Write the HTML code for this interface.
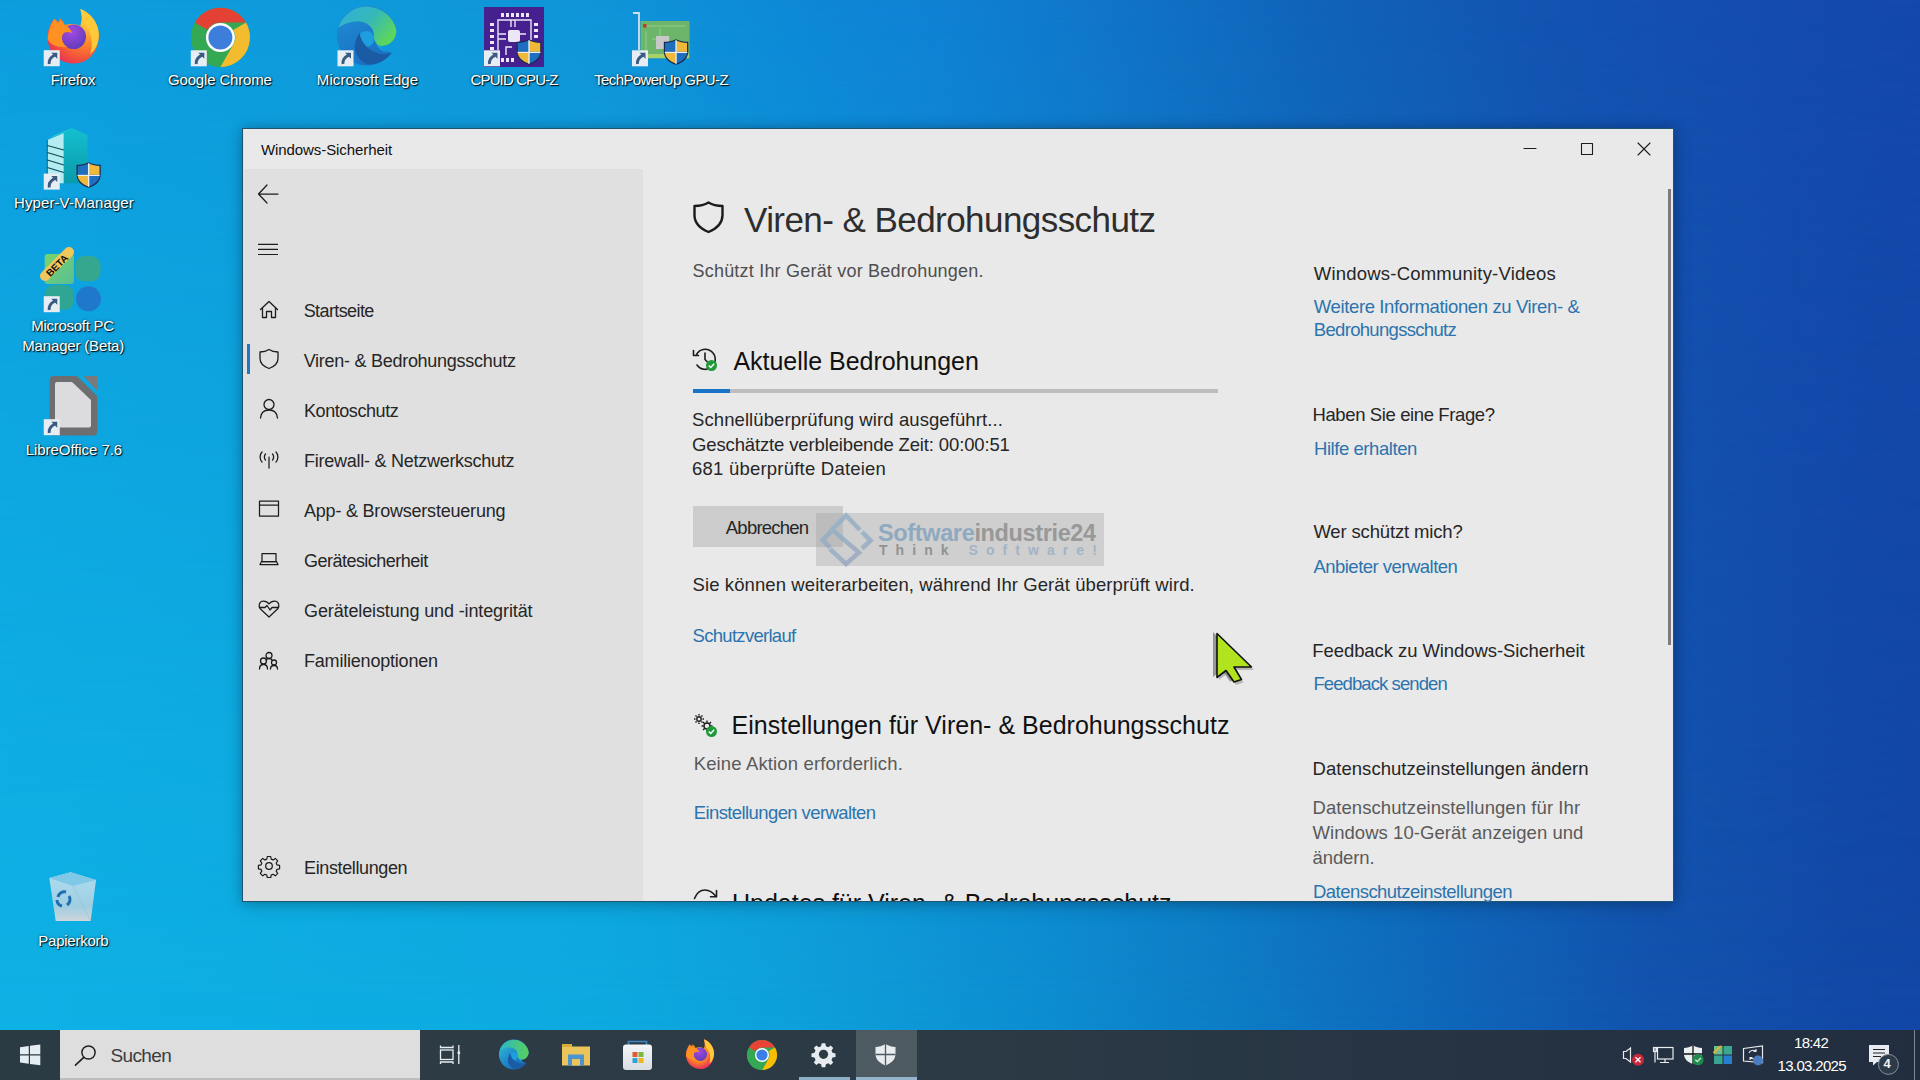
<!DOCTYPE html>
<html><head><meta charset="utf-8"><title>Windows-Sicherheit</title>
<style>
html,body{margin:0;padding:0;width:1920px;height:1080px;overflow:hidden;}
body{position:relative;font-family:"Liberation Sans",sans-serif;}
.t{position:absolute;white-space:pre;}
.dl{text-shadow:1px 1px 1px rgba(0,0,0,.95),0 0 3px rgba(0,0,0,.55);}
.abs{position:absolute;}
#bg{position:absolute;left:0;top:0;width:1920px;height:1030px;
 background:linear-gradient(90deg,rgb(14,178,229) 0%,rgb(13,170,224) 31.3%,rgb(14,160,218) 41.7%,rgb(13,142,210) 54.2%,rgb(13,128,200) 62.5%,rgb(15,104,187) 75%,rgb(18,83,174) 85.9%,rgb(18,73,168) 96.4%,rgb(18,71,167) 100%);}
#bg2{position:absolute;left:0;top:0;width:1920px;height:1030px;
 background:linear-gradient(90deg,rgb(13,157,222) 0%,rgb(14,154,219) 15.6%,rgb(15,148,216) 31.3%,rgb(13,135,213) 42.7%,rgb(15,129,211) 49%,rgb(16,117,200) 57.3%,rgb(16,97,184) 69.8%,rgb(19,83,177) 80.7%,rgb(20,74,173) 94.8%,rgb(21,72,171) 100%);
 -webkit-mask-image:linear-gradient(to bottom,rgba(0,0,0,1) 0%,rgba(0,0,0,.86) 10.7%,rgba(0,0,0,.71) 25%,rgba(0,0,0,.33) 60%,rgba(0,0,0,.14) 77%,rgba(0,0,0,.05) 95%,rgba(0,0,0,0) 100%);mask-image:linear-gradient(to bottom,rgba(0,0,0,1) 0%,rgba(0,0,0,.86) 10.7%,rgba(0,0,0,.71) 25%,rgba(0,0,0,.33) 60%,rgba(0,0,0,.14) 77%,rgba(0,0,0,.05) 95%,rgba(0,0,0,0) 100%);}
#win{position:absolute;left:242px;top:128px;width:1430px;height:772px;border:1px solid #1f5570;background:#e9e9e9;
 box-shadow:0 0 10px rgba(0,0,0,.2),0 4px 18px rgba(0,0,0,.16);overflow:hidden;}
#wintext{position:absolute;left:0;top:0;}
#clipc{position:absolute;left:243px;top:129px;width:1430px;height:772px;overflow:hidden;}
#clipc .t{margin-left:-243px;margin-top:-129px;}
</style></head>
<body>
<div id="bg"></div><div id="bg2"></div>

<svg class="abs" style="left:0;top:0" width="760" height="960" viewBox="0 0 760 960">
<defs>
 <radialGradient id="dffx" cx="0.75" cy="0.2" r="0.95">
  <stop offset="0" stop-color="#ffd23a"/><stop offset="0.45" stop-color="#ff8a28"/><stop offset="0.8" stop-color="#f04a40"/><stop offset="1" stop-color="#e2286a"/>
 </radialGradient>
 <radialGradient id="dffp" cx="0.4" cy="0.3" r="0.8"><stop offset="0" stop-color="#a44ae0"/><stop offset="1" stop-color="#5a3ab8"/></radialGradient>
 <linearGradient id="dedg1" x1="0" y1="0" x2="0.5" y2="1"><stop offset="0" stop-color="#1f8fd6"/><stop offset="1" stop-color="#1a70c2"/></linearGradient>
 <linearGradient id="dedg2" x1="0" y1="0" x2="1" y2="0.6"><stop offset="0" stop-color="#2fb0dc"/><stop offset="0.55" stop-color="#36b8b8"/><stop offset="1" stop-color="#5cd65c"/></linearGradient>
 <linearGradient id="dhv" x1="0" y1="0" x2="0" y2="1"><stop offset="0" stop-color="#13c0cf"/><stop offset="1" stop-color="#0a9aaa"/></linearGradient>
 <linearGradient id="dpcg" x1="0" y1="0" x2="1" y2="1"><stop offset="0" stop-color="#78d46a"/><stop offset="1" stop-color="#58bf95"/></linearGradient>
 <linearGradient id="dbin" x1="0" y1="0" x2="0" y2="1"><stop offset="0" stop-color="#b8dff0"/><stop offset="0.7" stop-color="#a6cfe2"/><stop offset="1" stop-color="#d8d8dc"/></linearGradient>
</defs>
<!-- firefox -->
<g transform="translate(73.2,37)"><path d="M-18.8,-18.2C-24,-12 -26,-5 -25.6,2C-25,16 -13,26.5 0.7,26.5C15,26.5 25.6,15 25.6,-2C25.6,-13 18,-24 7.2,-27.9C9,-22 9,-16 7,-11C4,-13 -3,-14 -8,-12C-10,-14 -12,-16 -13,-19L-15,-15Z" fill="url(#dffx)"/>
<path d="M7.2,-27.9C18,-24 25.6,-13 25.6,-2C25.6,6 22,13 17,17C20,8 19,-3 13,-10C11,-13 9,-18 7.2,-27.9Z" fill="#ffc93a"/>
<circle cx="0.5" cy="-0.3" r="12.3" fill="url(#dffp)"/>
<path d="M-25.6,2C-25,-6 -22,-13 -18.8,-18.2L-15.5,-14L-10.3,-16.3L-9.5,-12.5C-5,-11 -2,-7 -1.3,-4C-6,-6 -10,-5 -11,-1C-12,4 -9,8 -6,10C-15,11 -23,8 -25.6,2Z" fill="#ff9022"/></g>
<g transform="translate(43.75,50.2)"><rect x="0" y="0" width="16" height="16" fill="#e6eef3"/><path d="M7.5,2.5H13.5V8.5Z" fill="#3a5a82"/><path d="M11.2,4.8C7,7 4.8,10 5.5,13.8" fill="none" stroke="#3a5a82" stroke-width="3"/></g>
<!-- chrome -->
<circle cx="220.4" cy="37.4" r="29.6" fill="#34a853"/>
<path d="M220.4,7.8A29.6,29.6 0 0 1 246,22.6H220.4A14.8,14.8 0 0 0 207.6,30L194.8,22.6A29.6,29.6 0 0 1 220.4,7.8Z" fill="#e34133"/>
<path d="M246,22.6A29.6,29.6 0 0 1 220.4,67L233.2,44.8A14.8,14.8 0 0 0 233.2,30Z" fill="#f2bc2e"/>
<circle cx="220.4" cy="37.4" r="14.5" fill="#fff"/><circle cx="220.4" cy="37.4" r="12" fill="#3d7ddb"/>
<g transform="translate(190.8,50.3)"><rect x="0" y="0" width="16" height="16" fill="#e6eef3"/><path d="M7.5,2.5H13.5V8.5Z" fill="#3a5a82"/><path d="M11.2,4.8C7,7 4.8,10 5.5,13.8" fill="none" stroke="#3a5a82" stroke-width="3"/></g>
<!-- edge -->
<g transform="translate(367,36.5)"><path d="M24.6,16A30,30 0 1 1 29.5,-5.4C29,3 23,9.5 15,9.5C12,11 18,15 24.6,16Z" fill="url(#dedg1)"/>
<circle cx="-0.7" cy="2.4" r="8" fill="#1d9ede"/><path d="M7,0C8,8 12,13 17,15L24.6,16C18,15 13,12 15,9.5C10,9.5 7,5 7,0Z" fill="#1d9ede"/>
<path d="M-28.7,-8.6A30,30 0 0 1 29.5,-5.4C29,3 23,9.5 15,9.5C10,9.5 7,5 7.1,-0.2C7,-9 1,-14 -8,-15.2C-16,-15.5 -24,-12 -28.7,-8.6Z" fill="url(#dedg2)"/>
<path d="M-7.2,-3.4C-12,2 -14,12 -10,19C-6,25 -1,28 3,28C12,28 21,22 24.6,16C20,18 17,18 13,17.5C7,16 2,13 -1.5,9C-5,5 -7,1 -7.2,-3.4Z" fill="#1a5ba3"/></g>
<g transform="translate(337.5,50.3)"><rect x="0" y="0" width="16" height="16" fill="#e6eef3"/><path d="M7.5,2.5H13.5V8.5Z" fill="#3a5a82"/><path d="M11.2,4.8C7,7 4.8,10 5.5,13.8" fill="none" stroke="#3a5a82" stroke-width="3"/></g>
<!-- cpu-z -->
<rect x="484" y="7" width="60" height="60" fill="#46208f"/>
<g fill="#ece6f6">
 <rect x="501" y="13" width="3" height="4"/><rect x="506" y="13" width="3" height="4"/><rect x="511" y="13" width="3" height="4"/><rect x="516" y="13" width="3" height="4"/><rect x="521" y="13" width="3" height="4"/><rect x="526" y="13" width="3" height="4"/>
 <rect x="490" y="23" width="4" height="3"/><rect x="490" y="29" width="4" height="3"/><rect x="490" y="35" width="4" height="3"/><rect x="490" y="41" width="4" height="3"/><rect x="490" y="47" width="4" height="3"/>
 <rect x="534" y="23" width="4" height="3"/><rect x="534" y="29" width="4" height="3"/><rect x="534" y="35" width="4" height="3"/>
 <rect x="501" y="58" width="3" height="4"/><rect x="506" y="58" width="3" height="4"/><rect x="511" y="58" width="3" height="4"/>
 <rect x="508" y="30" width="12" height="12" rx="2"/>
</g>
<path d="M498,50V20H531V40M511,20V27M515,20V27M498,34H506M498,39H506M506,55V47H512M520,34H526" fill="none" stroke="#ece6f6" stroke-width="1.4"/>
<g transform="translate(515.5,38.3) scale(1.0384615384615385,1.0)">
<path d="M13,1C9,3 5,3.5 1,3.5V13C1,20 6,24.5 13,26.5C20,24.5 25,20 25,13V3.5C21,3.5 17,3 13,1Z" fill="#1a2a50"/>
<path d="M13,2.2C9.3,4 5.8,4.5 2.2,4.6V13.5H13Z" fill="#1f6fc0"/>
<path d="M13,2.2C16.7,4 20.2,4.5 23.8,4.6V13.5H13Z" fill="#f0b93a"/>
<path d="M2.2,14.5H13V25.2C7,23.4 2.6,19.5 2.2,14.5Z" fill="#f0b93a"/>
<path d="M23.8,14.5H13V25.2C19,23.4 23.4,19.5 23.8,14.5Z" fill="#1f6fc0"/>
<path d="M13,2V25.5M2,14H24" stroke="#e8f0f6" stroke-width="1.3"/></g>
<g transform="translate(484,50.3)"><rect x="0" y="0" width="16" height="16" fill="#e6eef3"/><path d="M7.5,2.5H13.5V8.5Z" fill="#3a5a82"/><path d="M11.2,4.8C7,7 4.8,10 5.5,13.8" fill="none" stroke="#3a5a82" stroke-width="3"/></g>
<!-- gpu-z -->
<path d="M633,13H639V50" fill="none" stroke="#cfe2ee" stroke-width="1.8"/>
<rect x="640.5" y="21" width="49" height="37.5" fill="#6cb56a"/>
<path d="M645,26H685M646,31V54M652,39H670M660,28V44" stroke="#9fd48a" stroke-width="0.8"/>
<rect x="643" y="24" width="3.5" height="3.5" fill="#c03a2a"/>
<rect x="656" y="36" width="13" height="13" fill="#c8c8c8"/>
<rect x="641" y="54" width="48" height="4" fill="#a9cf6a"/>
<g transform="translate(662.8,38.3) scale(1.0192307692307692,1.0)">
<path d="M13,1C9,3 5,3.5 1,3.5V13C1,20 6,24.5 13,26.5C20,24.5 25,20 25,13V3.5C21,3.5 17,3 13,1Z" fill="#1a2a50"/>
<path d="M13,2.2C9.3,4 5.8,4.5 2.2,4.6V13.5H13Z" fill="#1f6fc0"/>
<path d="M13,2.2C16.7,4 20.2,4.5 23.8,4.6V13.5H13Z" fill="#f0b93a"/>
<path d="M2.2,14.5H13V25.2C7,23.4 2.6,19.5 2.2,14.5Z" fill="#f0b93a"/>
<path d="M23.8,14.5H13V25.2C19,23.4 23.4,19.5 23.8,14.5Z" fill="#1f6fc0"/>
<path d="M13,2V25.5M2,14H24" stroke="#e8f0f6" stroke-width="1.3"/></g>
<g transform="translate(632,50.3)"><rect x="0" y="0" width="16" height="16" fill="#e6eef3"/><path d="M7.5,2.5H13.5V8.5Z" fill="#3a5a82"/><path d="M11.2,4.8C7,7 4.8,10 5.5,13.8" fill="none" stroke="#3a5a82" stroke-width="3"/></g>
<!-- hyper-v -->
<path d="M47.3,140L63.8,133V183.3L47.3,183.3Z" fill="#b4ecf2"/>
<path d="M63.8,133L72,128L87.5,135V183.3H63.8Z" fill="url(#dhv)"/>
<path d="M47.3,140L63.8,133L72,128L55,135Z" fill="#28c8d4"/>
<path d="M47.3,145.5L63.8,150M47.3,152.5L63.8,157.5M47.3,160L63.8,165M47.3,167.5L63.8,172.5" stroke="#0b4a58" stroke-width="1.2"/>
<path d="M47.3,140V183" stroke="#0b4a58" stroke-width="0.8"/>
<g transform="translate(75.5,161.3) scale(1.0096153846153846,1.0)">
<path d="M13,1C9,3 5,3.5 1,3.5V13C1,20 6,24.5 13,26.5C20,24.5 25,20 25,13V3.5C21,3.5 17,3 13,1Z" fill="#1a2a50"/>
<path d="M13,2.2C9.3,4 5.8,4.5 2.2,4.6V13.5H13Z" fill="#1f6fc0"/>
<path d="M13,2.2C16.7,4 20.2,4.5 23.8,4.6V13.5H13Z" fill="#f0b93a"/>
<path d="M2.2,14.5H13V25.2C7,23.4 2.6,19.5 2.2,14.5Z" fill="#f0b93a"/>
<path d="M23.8,14.5H13V25.2C19,23.4 23.4,19.5 23.8,14.5Z" fill="#1f6fc0"/>
<path d="M13,2V25.5M2,14H24" stroke="#e8f0f6" stroke-width="1.3"/></g>
<g transform="translate(43.75,173.6)"><rect x="0" y="0" width="16" height="16" fill="#e6eef3"/><path d="M7.5,2.5H13.5V8.5Z" fill="#3a5a82"/><path d="M11.2,4.8C7,7 4.8,10 5.5,13.8" fill="none" stroke="#3a5a82" stroke-width="3"/></g>
<!-- pc manager -->
<rect x="44.7" y="254" width="29.2" height="29.9" rx="3" fill="url(#dpcg)"/>
<rect x="75.2" y="256" width="25.3" height="25.3" rx="9" fill="#3aa786" opacity="0.9"/>
<rect x="44.7" y="285" width="29.2" height="24.8" rx="9" fill="#33a58c" opacity="0.9"/>
<circle cx="88.5" cy="298.8" r="12.5" fill="#1f78cc"/>
<path d="M45,276L69,252" stroke="#efc75a" stroke-width="10" stroke-linecap="round"/>
<text x="0" y="0" transform="translate(59.5,268) rotate(-45)" font-family="Liberation Sans" font-weight="bold" font-size="10" fill="#111" text-anchor="middle">BETA</text>
<g transform="translate(43.75,296.2)"><rect x="0" y="0" width="16" height="16" fill="#e6eef3"/><path d="M7.5,2.5H13.5V8.5Z" fill="#3a5a82"/><path d="M11.2,4.8C7,7 4.8,10 5.5,13.8" fill="none" stroke="#3a5a82" stroke-width="3"/></g>
<!-- libreoffice -->
<path d="M53.6,376H77L97.2,396V431.4A4,4 0 0 1 93.2,435.4H53.6A4,4 0 0 1 49.6,431.4V380A4,4 0 0 1 53.6,376Z" fill="#6e6e70"/>
<path d="M57,382H72L91,400V425.6A2,2 0 0 1 89,427.6H57A2,2 0 0 1 55,425.6V384A2,2 0 0 1 57,382Z" fill="#dcdcde"/>
<path d="M83.6,376H97.2V391.3Z" fill="#7a7a7c"/>
<path d="M80,376L97.2,393" stroke="#0eaae2" stroke-width="2.5"/>
<g transform="translate(43.75,419.2)"><rect x="0" y="0" width="16" height="16" fill="#e6eef3"/><path d="M7.5,2.5H13.5V8.5Z" fill="#3a5a82"/><path d="M11.2,4.8C7,7 4.8,10 5.5,13.8" fill="none" stroke="#3a5a82" stroke-width="3"/></g>
<!-- recycle bin -->
<path d="M49.3,878L70.6,872.3L96,880L90.7,921H55.7Z" fill="url(#dbin)" opacity="0.95"/>
<path d="M49.3,878L70.6,872.3L96,880L73,886Z" fill="#7fc8e6"/>
<path d="M73,886L90.7,921" stroke="#9ac2d6" stroke-width="0.8"/>
<g fill="none" stroke="#1e6fb0" stroke-width="3">
<path d="M58,897A6.5,6.5 0 0 1 66,892"/><path d="M69,896A6.5,6.5 0 0 1 67,905"/><path d="M62,906A6.5,6.5 0 0 1 57,900"/>
</g>
</svg>

<div class="t dl" style="left:50.8px;top:72.40px;font-size:15px;line-height:15px;color:#ffffff;letter-spacing:-0.190px;">Firefox</div>
<div class="t dl" style="left:168.0px;top:72.40px;font-size:15px;line-height:15px;color:#ffffff;letter-spacing:-0.162px;">Google Chrome</div>
<div class="t dl" style="left:316.8px;top:72.40px;font-size:15px;line-height:15px;color:#ffffff;letter-spacing:0.100px;">Microsoft Edge</div>
<div class="t dl" style="left:470.6px;top:72.40px;font-size:15px;line-height:15px;color:#ffffff;letter-spacing:-0.880px;">CPUID CPU-Z</div>
<div class="t dl" style="left:594.2px;top:72.40px;font-size:15px;line-height:15px;color:#ffffff;letter-spacing:-0.615px;">TechPowerUp GPU-Z</div>
<div class="t dl" style="left:14.0px;top:195.40px;font-size:15px;line-height:15px;color:#ffffff;letter-spacing:0.101px;">Hyper-V-Manager</div>
<div class="t dl" style="left:31.2px;top:318.20px;font-size:15px;line-height:15px;color:#ffffff;letter-spacing:-0.274px;">Microsoft PC</div>
<div class="t dl" style="left:22.3px;top:337.90px;font-size:15px;line-height:15px;color:#ffffff;letter-spacing:-0.171px;">Manager (Beta)</div>
<div class="t dl" style="left:25.8px;top:441.50px;font-size:15px;line-height:15px;color:#ffffff;letter-spacing:-0.067px;">LibreOffice 7.6</div>
<div class="t dl" style="left:38.3px;top:933.10px;font-size:15px;line-height:15px;color:#ffffff;letter-spacing:-0.244px;">Papierkorb</div>
<div id="win">
<div class="abs" style="left:0px;top:0px;width:1px;height:772px;background:#c6e8f4"></div>
<div class="abs" style="left:1px;top:40px;width:399px;height:732px;background:#e0e0e0"></div>
<div class="abs" style="left:4px;top:215px;width:3px;height:30px;background:#1e78c2"></div>
<div class="abs" style="left:450px;top:260px;width:525px;height:4px;background:#bdbdbd"></div>
<div class="abs" style="left:450px;top:260px;width:37px;height:4px;background:#1a74c6"></div>
<div class="abs" style="left:450px;top:377px;width:150px;height:41px;background:#cccccc"></div>
<div class="abs" style="left:1425px;top:60px;width:3px;height:456px;background:#7c7c7c"></div>
</div>
<div id="wintext">
<div class="t " style="left:261.0px;top:142.00px;font-size:15px;line-height:15px;color:#111;letter-spacing:-0.081px;">Windows-Sicherheit</div>
<div class="t " style="left:303.7px;top:302.26px;font-size:18px;line-height:18px;color:#262626;letter-spacing:-0.603px;">Startseite</div>
<div class="t " style="left:303.7px;top:352.26px;font-size:18px;line-height:18px;color:#262626;letter-spacing:-0.271px;">Viren- & Bedrohungsschutz</div>
<div class="t " style="left:304.0px;top:402.26px;font-size:18px;line-height:18px;color:#262626;letter-spacing:-0.436px;">Kontoschutz</div>
<div class="t " style="left:304.0px;top:452.26px;font-size:18px;line-height:18px;color:#262626;letter-spacing:-0.258px;">Firewall- & Netzwerkschutz</div>
<div class="t " style="left:304.0px;top:502.26px;font-size:18px;line-height:18px;color:#262626;letter-spacing:-0.209px;">App- & Browsersteuerung</div>
<div class="t " style="left:304.0px;top:552.26px;font-size:18px;line-height:18px;color:#262626;letter-spacing:-0.524px;">Gerätesicherheit</div>
<div class="t " style="left:304.0px;top:602.26px;font-size:18px;line-height:18px;color:#262626;letter-spacing:-0.125px;">Geräteleistung und -integrität</div>
<div class="t " style="left:304.0px;top:652.26px;font-size:18px;line-height:18px;color:#262626;letter-spacing:-0.205px;">Familienoptionen</div>
<div class="t " style="left:304.0px;top:859.26px;font-size:18px;line-height:18px;color:#262626;letter-spacing:-0.372px;">Einstellungen</div>
<div class="t " style="left:744.0px;top:201.87px;font-size:35px;line-height:35px;color:#2e2e2e;letter-spacing:-0.560px;">Viren- & Bedrohungsschutz</div>
<div class="t " style="left:692.5px;top:261.96px;font-size:18px;line-height:18px;color:#4e4e4e;letter-spacing:0.207px;">Schützt Ihr Gerät vor Bedrohungen.</div>
<div class="t " style="left:733.4px;top:349.34px;font-size:25px;line-height:25px;color:#111;letter-spacing:-0.027px;">Aktuelle Bedrohungen</div>
<div class="t " style="left:692.0px;top:411.14px;font-size:18.5px;line-height:18.5px;color:#262626;letter-spacing:0.093px;">Schnellüberprüfung wird ausgeführt...</div>
<div class="t " style="left:692.0px;top:435.84px;font-size:18.5px;line-height:18.5px;color:#262626;letter-spacing:-0.136px;">Geschätzte verbleibende Zeit: 00:00:51</div>
<div class="t " style="left:692.0px;top:460.44px;font-size:18.5px;line-height:18.5px;color:#262626;letter-spacing:0.221px;">681 überprüfte Dateien</div>
<div class="t " style="left:725.8px;top:519.24px;font-size:18.5px;line-height:18.5px;color:#262626;letter-spacing:-0.774px;">Abbrechen</div>
<div class="t " style="left:692.6px;top:576.14px;font-size:18.5px;line-height:18.5px;color:#262626;letter-spacing:0.093px;">Sie können weiterarbeiten, während Ihr Gerät überprüft wird.</div>
<div class="t " style="left:692.6px;top:626.54px;font-size:18.5px;line-height:18.5px;color:#2b74ae;letter-spacing:-0.712px;">Schutzverlauf</div>
<div class="t " style="left:731.6px;top:713.44px;font-size:25px;line-height:25px;color:#111;letter-spacing:0.018px;">Einstellungen für Viren- & Bedrohungsschutz</div>
<div class="t " style="left:693.7px;top:754.84px;font-size:18.5px;line-height:18.5px;color:#5a5a5a;letter-spacing:0.138px;">Keine Aktion erforderlich.</div>
<div class="t " style="left:693.7px;top:804.44px;font-size:18.5px;line-height:18.5px;color:#2b74ae;letter-spacing:-0.596px;">Einstellungen verwalten</div>
<div class="t " style="left:1313.8px;top:264.54px;font-size:18.5px;line-height:18.5px;color:#262626;letter-spacing:0.209px;">Windows-Community-Videos</div>
<div class="t " style="left:1313.8px;top:297.64px;font-size:18.5px;line-height:18.5px;color:#2b74ae;letter-spacing:-0.373px;">Weitere Informationen zu Viren- &</div>
<div class="t " style="left:1313.8px;top:321.09px;font-size:18.5px;line-height:18.5px;color:#2b74ae;letter-spacing:-0.686px;">Bedrohungsschutz</div>
<div class="t " style="left:1312.5px;top:405.84px;font-size:18.5px;line-height:18.5px;color:#262626;letter-spacing:-0.389px;">Haben Sie eine Frage?</div>
<div class="t " style="left:1314.0px;top:439.84px;font-size:18.5px;line-height:18.5px;color:#2b74ae;letter-spacing:-0.440px;">Hilfe erhalten</div>
<div class="t " style="left:1313.4px;top:523.44px;font-size:18.5px;line-height:18.5px;color:#262626;letter-spacing:-0.158px;">Wer schützt mich?</div>
<div class="t " style="left:1313.4px;top:557.74px;font-size:18.5px;line-height:18.5px;color:#2b74ae;letter-spacing:-0.514px;">Anbieter verwalten</div>
<div class="t " style="left:1312.3px;top:641.74px;font-size:18.5px;line-height:18.5px;color:#262626;letter-spacing:-0.076px;">Feedback zu Windows-Sicherheit</div>
<div class="t " style="left:1313.4px;top:675.44px;font-size:18.5px;line-height:18.5px;color:#2b74ae;letter-spacing:-0.906px;">Feedback senden</div>
<div class="t " style="left:1312.5px;top:759.54px;font-size:18.5px;line-height:18.5px;color:#262626;letter-spacing:0.046px;">Datenschutzeinstellungen ändern</div>
<div class="t " style="left:1312.5px;top:798.84px;font-size:18.5px;line-height:18.5px;color:#5a5a5a;letter-spacing:0.072px;">Datenschutzeinstellungen für Ihr</div>
<div class="t " style="left:1312.5px;top:824.24px;font-size:18.5px;line-height:18.5px;color:#5a5a5a;letter-spacing:0.052px;">Windows 10-Gerät anzeigen und</div>
<div class="t " style="left:1312.5px;top:848.84px;font-size:18.5px;line-height:18.5px;color:#5a5a5a;letter-spacing:-0.101px;">ändern.</div>
<div class="t " style="left:1313.0px;top:882.54px;font-size:18.5px;line-height:18.5px;color:#2b74ae;letter-spacing:-0.538px;">Datenschutzeinstellungen</div>
</div>
<div id="clipc"><div class="t " style="left:732.0px;top:891.34px;font-size:25px;line-height:25px;color:#111;letter-spacing:-0.016px;">Updates für Viren- & Bedrohungsschutz</div></div>
<svg class="abs" style="left:1520px;top:140px;" width="140" height="20" viewBox="0 0 140 20"><path d="M4,8.5H16" fill="none" stroke="#1c1c1c" stroke-linecap="round" stroke-linejoin="round" stroke-width="1.1"/><rect x="61.5" y="3.5" width="11" height="11" fill="none" stroke="#1c1c1c" stroke-linecap="round" stroke-linejoin="round" stroke-width="1.1"/><path d="M118,3L130,15M130,3L118,15" fill="none" stroke="#1c1c1c" stroke-linecap="round" stroke-linejoin="round" stroke-width="1.1"/></svg>
<svg class="abs" style="left:256px;top:183px;" width="24" height="22" viewBox="0 0 24 22"><path d="M2.5,11H22M11,2L2.5,11L11,20" fill="none" stroke="#1c1c1c" stroke-linecap="round" stroke-linejoin="round" stroke-width="1.25"/></svg>
<svg class="abs" style="left:256px;top:240px;" width="24" height="18" viewBox="0 0 24 18"><path d="M2,4.3H22M2,9.4H22M2,14.5H22" stroke="#1c1c1c" stroke-width="1.2"/></svg>
<svg class="abs" style="left:258px;top:299px;" width="22" height="21" viewBox="0 0 22 21"><path d="M2.5,10.5L11,2.5L19.5,10.5M4.5,9V18.5H8.5V12.5H13.5V18.5H17.5V9" fill="none" stroke="#1c1c1c" stroke-linecap="round" stroke-linejoin="round" stroke-width="1.3"/></svg>
<svg class="abs" style="left:257px;top:347px;" width="24" height="24" viewBox="0 0 24 24"><path d="M12,2.5C9,4.5 6,5 3,5V11.5C3,16 6.5,19.5 12,21.5C17.5,19.5 21,16 21,11.5V5C18,5 15,4.5 12,2.5Z" fill="none" stroke="#1c1c1c" stroke-linecap="round" stroke-linejoin="round" stroke-width="1.3"/></svg>
<svg class="abs" style="left:258px;top:397px;" width="22" height="24" viewBox="0 0 22 24"><circle cx="11" cy="7.5" r="5" fill="none" stroke="#1c1c1c" stroke-linecap="round" stroke-linejoin="round" stroke-width="1.3"/><path d="M2.5,21C3,15.5 6.5,13 11,13C15.5,13 19,15.5 19.5,21" fill="none" stroke="#1c1c1c" stroke-linecap="round" stroke-linejoin="round" stroke-width="1.3"/></svg>
<svg class="abs" style="left:257px;top:449px;" width="24" height="22" viewBox="0 0 24 22"><path d="M12,8V19" fill="none" stroke="#1c1c1c" stroke-linecap="round" stroke-linejoin="round" stroke-width="1.25"/><path d="M8.5,5C7,6.5 7,9.5 8.5,11M15.5,5C17,6.5 17,9.5 15.5,11M5,3C2.5,5.5 2.5,10.5 5,13M19,3C21.5,5.5 21.5,10.5 19,13" fill="none" stroke="#1c1c1c" stroke-linecap="round" stroke-linejoin="round" stroke-width="1.3"/></svg>
<svg class="abs" style="left:257px;top:498px;" width="24" height="21" viewBox="0 0 24 21"><rect x="2.5" y="3" width="19" height="15" fill="none" stroke="#1c1c1c" stroke-linecap="round" stroke-linejoin="round" stroke-width="1.25"/><path d="M2.5,7H21.5" fill="none" stroke="#1c1c1c" stroke-linecap="round" stroke-linejoin="round" stroke-width="1.25"/></svg>
<svg class="abs" style="left:258px;top:551px;" width="22" height="16" viewBox="0 0 22 16"><path d="M4,2.5H18V10.5H4Z" fill="none" stroke="#1c1c1c" stroke-linecap="round" stroke-linejoin="round" stroke-width="1.25"/><path d="M2,13.5H20L18.5,10.5H3.5Z" fill="none" stroke="#1c1c1c" stroke-linecap="round" stroke-linejoin="round" stroke-width="1.25"/></svg>
<svg class="abs" style="left:257px;top:598px;" width="24" height="22" viewBox="0 0 24 22"><path d="M12,19L3.5,11C1,8 2,3.5 6.5,3C9,3 11,4.5 12,6C13,4.5 15,3 17.5,3C22,3.5 23,8 20.5,11Z" fill="none" stroke="#1c1c1c" stroke-linecap="round" stroke-linejoin="round" stroke-width="1.25"/><path d="M2.5,9.5H8L10,7.5L13,12L15,9.5H21.5" fill="none" stroke="#1c1c1c" stroke-linecap="round" stroke-linejoin="round" stroke-width="1.3"/></svg>
<svg class="abs" style="left:257px;top:650px;" width="24" height="21" viewBox="0 0 24 21"><circle cx="12" cy="5.5" r="3" fill="none" stroke="#1c1c1c" stroke-linecap="round" stroke-linejoin="round" stroke-width="1.3"/><circle cx="6.5" cy="11" r="3" fill="none" stroke="#1c1c1c" stroke-linecap="round" stroke-linejoin="round" stroke-width="1.3"/><circle cx="17" cy="12.5" r="2.5" fill="none" stroke="#1c1c1c" stroke-linecap="round" stroke-linejoin="round" stroke-width="1.3"/><path d="M2.5,19C2.5,16 4,14.5 6.5,14.5C9,14.5 10.5,16 10.5,19M13.5,19C13.5,16.5 15,15.5 17,15.5C19,15.5 20.5,16.5 20.5,19M9,10C9.5,9 10.5,8.5 12,8.5C13.5,8.5 14.5,9 15,10" fill="none" stroke="#1c1c1c" stroke-linecap="round" stroke-linejoin="round" stroke-width="1.3"/></svg>
<svg class="abs" style="left:257px;top:854px;" width="24" height="24" viewBox="0 0 24 24"><path d="M10.3,2.5h3.4l.5,2.6 1.9,.8 2.2-1.5 2.4,2.4-1.5,2.2.8,1.9 2.6,.5v3.4l-2.6,.5-.8,1.9 1.5,2.2-2.4,2.4-2.2-1.5-1.9,.8-.5,2.6h-3.4l-.5-2.6-1.9-.8-2.2,1.5-2.4-2.4 1.5-2.2-.8-1.9-2.6-.5v-3.4l2.6-.5.8-1.9-1.5-2.2 2.4-2.4 2.2,1.5 1.9-.8z" fill="none" stroke="#1c1c1c" stroke-width="1.2" stroke-linejoin="round"/><circle cx="12" cy="12" r="3.3" fill="none" stroke="#1c1c1c" stroke-width="1.3"/></svg>
<svg class="abs" style="left:692px;top:200px;" width="33" height="35" viewBox="0 0 33 35"><path d="M16.5,2.5C12.5,5 7.5,6 2.5,6V15C2.5,23 8,28.5 16.5,32C25,28.5 30.5,23 30.5,15V6C25.5,6 20.5,5 16.5,2.5Z" fill="none" stroke="#1c1c1c" stroke-linecap="round" stroke-linejoin="round" stroke-width="2.4"/></svg>
<svg class="abs" style="left:691px;top:346px;" width="28" height="27" viewBox="0 0 28 27"><path d="M5.5,8.5A10,10 0 1 1 6,19" fill="none" stroke="#1c1c1c" stroke-linecap="round" stroke-linejoin="round" stroke-width="1.6"/><path d="M2.5,4.5V9.5H7.5" fill="none" stroke="#1c1c1c" stroke-linecap="round" stroke-linejoin="round" stroke-width="1.6"/><path d="M14,7V13.5L17.5,17" fill="none" stroke="#1c1c1c" stroke-linecap="round" stroke-linejoin="round" stroke-width="1.6"/><circle cx="20.5" cy="19.5" r="5.5" fill="#1f9a3a"/><path d="M17.8,19.6L19.8,21.5L23.2,17.8" fill="none" stroke="#fff" stroke-width="1.5"/></svg>
<svg class="abs" style="left:692px;top:712px;" width="28" height="26" viewBox="0 0 28 26"><g fill="none" stroke="#1c1c1c" stroke-width="1.4"><circle cx="7" cy="7" r="2.2"/><path d="M7,2V3.5M7,10.5V12M2,7H3.5M10.5,7H12M3.5,3.5L4.6,4.6M9.4,9.4L10.5,10.5M3.5,10.5L4.6,9.4M9.4,4.6L10.5,3.5"/><circle cx="15" cy="14" r="3"/><path d="M15,8.5V10.5M15,17.5V19.5M9.5,14H11.5M18.5,14H20.5M11,10L12.5,11.5M17.5,16.5L19,18M11,18L12.5,16.5M17.5,11.5L19,10"/></g><circle cx="19.5" cy="19.5" r="5.5" fill="#1f9a3a"/><path d="M16.8,19.6L18.8,21.5L22.2,17.8" fill="none" stroke="#fff" stroke-width="1.5"/></svg>
<svg class="abs" style="left:690px;top:886px;" width="30" height="15" viewBox="0 0 30 15"><path d="M4.5,12.5C7,6 11,4 15,4C19.5,4 23,6.5 26,10.5" fill="none" stroke="#1c1c1c" stroke-linecap="round" stroke-linejoin="round" stroke-width="1.6"/><path d="M26.5,4.5V10.8H20.5" fill="none" stroke="#1c1c1c" stroke-linecap="round" stroke-linejoin="round" stroke-width="1.6"/></svg>

<div class="abs" style="left:816px;top:513px;width:288px;height:53px;background:rgba(160,160,160,0.36)"></div>
<svg class="abs" style="left:812px;top:508px" width="70" height="62" viewBox="812 508 70 62">
<defs><linearGradient id="wmg" x1="0" y1="0" x2="1" y2="1"><stop offset="0" stop-color="#8fb3cc"/><stop offset="1" stop-color="#9aa4bc"/></linearGradient></defs>
<g fill="none" stroke="url(#wmg)" stroke-width="4.6" stroke-linejoin="miter" opacity="0.8">
<path d="M860,530L846,515.5L832,529.5L859,552.5L846,564L830,549"/>
<path d="M831,531.5L822.5,540L830,547.5"/>
<path d="M862,532L870.5,540.5L862,548.5"/>
</g>
</svg>
<div class="t" style="left:878px;top:520.5px;font-size:23.5px;line-height:24px;font-weight:bold;letter-spacing:-0.36px"><span style="color:#8ea9c0">Software</span><span style="color:#989898">industrie24</span></div>
<div class="t" style="left:879px;top:542.5px;font-size:14px;line-height:14px;font-weight:bold;letter-spacing:8.06px"><span style="color:#929292">Think </span><span style="color:#a2b4c6">Software!</span></div>
<svg class="abs" style="left:1205px;top:625px" width="60" height="66" viewBox="1205 625 60 66">
<path d="M1213,632V677L1222,670L1230,681.5L1237.5,679L1230,666.5L1247.5,666.5Z" fill="#7a7a7a" opacity="0.75"/><path d="M1219,636V680L1228,673L1236,685L1243.5,682.5L1236,670L1254,670Z" fill="#7a7a7a" opacity="0.45"/>
<path d="M1217,633.5V677.5L1226,670.5L1234,682L1241.5,679.5L1234,667L1251.5,667Z" fill="#b2e31f" stroke="#111" stroke-width="1.6" stroke-linejoin="round"/>
</svg>


<svg class="abs" style="left:0;top:1030px" width="1920" height="50" viewBox="0 1030 1920 50">
<defs>
 <linearGradient id="tbg" x1="0" y1="0" x2="1" y2="0">
  <stop offset="0" stop-color="#2d3c44"/><stop offset="0.5" stop-color="#2b3a44"/><stop offset="0.75" stop-color="#263444"/><stop offset="1" stop-color="#222e40"/>
 </linearGradient>
 <linearGradient id="edg1" x1="0" y1="0" x2="1" y2="1">
  <stop offset="0" stop-color="#35c1d8"/><stop offset="0.5" stop-color="#1e88c9"/><stop offset="1" stop-color="#1657a8"/>
 </linearGradient>
 <linearGradient id="edg2" x1="0" y1="0" x2="1" y2="0">
  <stop offset="0" stop-color="#2bb7c9"/><stop offset="1" stop-color="#58d05a"/>
 </linearGradient>
 <radialGradient id="ffx" cx="0.45" cy="0.45" r="0.6">
  <stop offset="0" stop-color="#ffdb3a"/><stop offset="0.5" stop-color="#ff8a1e"/><stop offset="1" stop-color="#e3206a"/>
 </radialGradient>
 <radialGradient id="ffp" cx="0.4" cy="0.3" r="0.8"><stop offset="0" stop-color="#a44ae0"/><stop offset="1" stop-color="#5a3ab8"/></radialGradient>
 <linearGradient id="storeg" x1="0" y1="0" x2="0" y2="1"><stop offset="0" stop-color="#f4f6f8"/><stop offset="1" stop-color="#d8dde2"/></linearGradient>
</defs>
<rect x="0" y="1030" width="1920" height="50" fill="url(#tbg)"/>
<rect x="0" y="1030" width="60" height="50" fill="#2b3b43"/>
<!-- start logo -->
<path d="M20,1047.3L28.8,1046V1054.3H20Z M30,1045.8L40.3,1044.4V1054.3H30Z M20,1055.5H28.8V1063.8L20,1062.6Z M30,1055.5H40.3V1065.3L30,1064Z" fill="#e4edf2"/>
<!-- search box -->
<rect x="60" y="1030" width="360" height="50" fill="#dedede"/>
<rect x="60" y="1078" width="360" height="2" fill="#bdbdbd"/>
<circle cx="88.5" cy="1052.5" r="6.6" fill="none" stroke="#222" stroke-width="1.5"/>
<path d="M83.8,1057.4L75.5,1065.2" stroke="#222" stroke-width="1.6" stroke-linecap="round"/>
<!-- task view -->
<g fill="none" stroke="#e8eef2" stroke-width="1.3">
 <path d="M440.5,1045.5V1047.5H453V1045.5M440.5,1064V1062H453V1064"/>
 <rect x="440.5" y="1050" width="12.5" height="9.5"/>
 <path d="M458.8,1045V1064"/>
</g>
<rect x="457.6" y="1051.5" width="2.5" height="2.5" fill="#e8eef2"/>
<!-- edge -->
<g transform="translate(514,1055) scale(0.5)"><path d="M24.6,16A30,30 0 1 1 29.5,-5.4C29,3 23,9.5 15,9.5C12,11 18,15 24.6,16Z" fill="url(#edg1)"/>
<circle cx="-0.7" cy="2.4" r="8" fill="#1d9ede"/><path d="M7,0C8,8 12,13 17,15L24.6,16C18,15 13,12 15,9.5C10,9.5 7,5 7,0Z" fill="#1d9ede"/>
<path d="M-28.7,-8.6A30,30 0 0 1 29.5,-5.4C29,3 23,9.5 15,9.5C10,9.5 7,5 7.1,-0.2C7,-9 1,-14 -8,-15.2C-16,-15.5 -24,-12 -28.7,-8.6Z" fill="url(#edg2)"/>
<path d="M-7.2,-3.4C-12,2 -14,12 -10,19C-6,25 -1,28 3,28C12,28 21,22 24.6,16C20,18 17,18 13,17.5C7,16 2,13 -1.5,9C-5,5 -7,1 -7.2,-3.4Z" fill="#1a5ba3"/></g>
<!-- explorer -->
<path d="M562,1044.5H570.5L572.5,1046.5H590V1065.5H562Z" fill="#e9c55c"/>
<rect x="562" y="1044" width="10" height="3" fill="#d9ad3c"/>
<rect x="568" y="1054.5" width="16" height="11" fill="#4d93cf"/>
<rect x="572" y="1059" width="8" height="6.5" fill="#e9c55c"/>
<!-- store -->
<path d="M628.5,1045V1041.5H646.5V1045" fill="none" stroke="#3d8bc6" stroke-width="1.6"/>
<rect x="623" y="1044.5" width="29" height="25.5" rx="3" fill="url(#storeg)"/>
<rect x="632.5" y="1052" width="5" height="5" fill="#e05a35"/><rect x="638.5" y="1052" width="5" height="5" fill="#7cb83a"/>
<rect x="632.5" y="1058" width="5" height="5" fill="#2aa2e0"/><rect x="638.5" y="1058" width="5" height="5" fill="#f0b420"/>
<!-- firefox -->
<g transform="translate(700,1054.5) scale(0.55)"><path d="M-18.8,-18.2C-24,-12 -26,-5 -25.6,2C-25,16 -13,26.5 0.7,26.5C15,26.5 25.6,15 25.6,-2C25.6,-13 18,-24 7.2,-27.9C9,-22 9,-16 7,-11C4,-13 -3,-14 -8,-12C-10,-14 -12,-16 -13,-19L-15,-15Z" fill="url(#ffx)"/>
<path d="M7.2,-27.9C18,-24 25.6,-13 25.6,-2C25.6,6 22,13 17,17C20,8 19,-3 13,-10C11,-13 9,-18 7.2,-27.9Z" fill="#ffc93a"/>
<circle cx="0.5" cy="-0.3" r="12.3" fill="url(#ffp)"/>
<path d="M-25.6,2C-25,-6 -22,-13 -18.8,-18.2L-15.5,-14L-10.3,-16.3L-9.5,-12.5C-5,-11 -2,-7 -1.3,-4C-6,-6 -10,-5 -11,-1C-12,4 -9,8 -6,10C-15,11 -23,8 -25.6,2Z" fill="#ff9022"/></g>
<!-- chrome -->
<circle cx="762" cy="1055" r="15" fill="#34a853"/>
<path d="M762,1040A15,15 0 0 1 775,1047.5H762A7.5,7.5 0 0 0 755.5,1051.2L749,1047.5A15,15 0 0 1 762,1040Z" fill="#ea4335"/>
<path d="M775,1047.5A15,15 0 0 1 762,1070L768.5,1058.75A7.5,7.5 0 0 0 768.5,1051.25Z" fill="#fbbc04"/>
<path d="M749,1047.5L755.5,1058.8A7.5,7.5 0 0 0 768.5,1058.75L762,1070A15,15 0 0 1 749,1047.5Z" fill="#34a853"/>
<circle cx="762" cy="1055" r="7" fill="#fff"/><circle cx="762" cy="1055" r="5.6" fill="#3b7ee8"/>
<!-- active underline + shield bg -->
<rect x="856" y="1030" width="61" height="50" fill="#4d5a61"/>
<rect x="799" y="1077" width="51" height="3" fill="#8db0c8"/>
<rect x="856" y="1077" width="61" height="3" fill="#93b4cc"/>
<!-- settings gear -->
<path d="M821.7,1043.2h3.6l.6,3 2.3,1 2.5-1.7 2.5,2.5-1.7,2.5 1,2.3 3,.6v3.6l-3,.6-1,2.3 1.7,2.5-2.5,2.5-2.5-1.7-2.3,1-.6,3h-3.6l-.6-3-2.3-1-2.5,1.7-2.5-2.5 1.7-2.5-1-2.3-3-.6v-3.6l3-.6 1-2.3-1.7-2.5 2.5-2.5 2.5,1.7 2.3-1z" fill="#e6ecef"/>
<circle cx="823.5" cy="1054.3" r="4.6" fill="#2c3b43"/>
<!-- shield -->
<path d="M885.5,1044C882,1046 879,1047 875.5,1047V1054C875.5,1059 879,1063 885.5,1065.5C892,1063 895.5,1059 895.5,1054V1047C892,1047 889,1046 885.5,1044Z" fill="#e7ecef"/>
<path d="M885.5,1044V1065.5M875.5,1054.5H895.5" stroke="#4d5a61" stroke-width="1.3"/>
<!-- tray: speaker -->
<path d="M1623.5,1051.5H1626L1630.5,1048V1062L1626,1058.5H1623.5Z" fill="none" stroke="#e8ecef" stroke-width="1.2"/>
<circle cx="1638" cy="1059.7" r="6" fill="#c8283a"/>
<path d="M1635.5,1057.2L1640.5,1062.2M1640.5,1057.2L1635.5,1062.2" stroke="#fff" stroke-width="1.3"/>
<!-- network -->
<g fill="none" stroke="#e8ecef" stroke-width="1.2"><rect x="1657.5" y="1047.5" width="15.5" height="11.5"/><path d="M1665,1059V1062.5M1660,1062.5H1669M1653.5,1047.5H1657M1655,1047.5V1062.5"/><rect x="1653.5" y="1047.5" width="3" height="4"/></g>
<!-- defender shield -->
<path d="M1693,1045.5C1690,1047 1687,1048 1684,1048V1054C1684,1058.5 1687,1062 1693,1064C1699,1062 1702,1058.5 1702,1054V1048C1699,1048 1696,1047 1693,1045.5Z" fill="#e9eef0"/>
<path d="M1693,1045.5V1064M1684,1054H1702" stroke="#111" stroke-width="1.3"/>
<circle cx="1698" cy="1059.7" r="5.6" fill="#1f8a4c"/>
<path d="M1695.3,1059.8L1697.3,1061.7L1700.8,1058" fill="none" stroke="#cdeccd" stroke-width="1.3"/>
<!-- pc manager -->
<rect x="1714" y="1046" width="8.5" height="8.5" fill="#6dbf8a"/><rect x="1723.5" y="1046" width="8.5" height="8.5" fill="#3aa88d"/>
<rect x="1714" y="1055.5" width="8.5" height="8.5" fill="#37a58f"/><rect x="1723.5" y="1055.5" width="8.5" height="8.5" fill="#2a7ed0"/>
<path d="M1713.5,1053L1721,1046" stroke="#d9b43a" stroke-width="2.2"/>
<!-- sync monitor -->
<path d="M1743.5,1048.5L1762.5,1046V1062.5L1743.5,1061Z" fill="none" stroke="#e8ecef" stroke-width="1.2"/>
<path d="M1749,1053C1750,1050.5 1753,1049.5 1756,1051M1756,1049V1051.5H1753.5M1757,1056C1756,1058.5 1753,1059.5 1750,1058M1750,1060V1057.5H1752.5" fill="none" stroke="#e8ecef" stroke-width="1.1"/>
<circle cx="1758" cy="1060.5" r="5" fill="#4a7cc0"/>
<!-- notification -->
<path d="M1869,1045H1889V1062H1877L1873,1065.5V1062H1869Z" fill="#e8ecf2"/>
<path d="M1873,1049.5H1885M1873,1053H1885M1873,1056.5H1881" stroke="#222" stroke-width="1"/>
<circle cx="1888.4" cy="1064.4" r="10" fill="#2c3a4a" stroke="#8a9298" stroke-width="1"/>
<rect x="1914" y="1030" width="1" height="50" fill="#7f8890"/>
</svg>
<div class="t" style="left:1883.5px;top:1056px;font-size:13px;line-height:16px;color:#f2f2f2;font-weight:bold">4</div>

<div class="t " style="left:110.6px;top:1046.32px;font-size:19px;line-height:19px;color:#3c3c3c;letter-spacing:-0.655px;">Suchen</div>
<div class="t " style="left:1794.0px;top:1035.40px;font-size:15px;line-height:15px;color:#fff;letter-spacing:-0.674px;">18:42</div>
<div class="t " style="left:1777.5px;top:1058.40px;font-size:15px;line-height:15px;color:#fff;letter-spacing:-0.659px;">13.03.2025</div>
</body></html>
